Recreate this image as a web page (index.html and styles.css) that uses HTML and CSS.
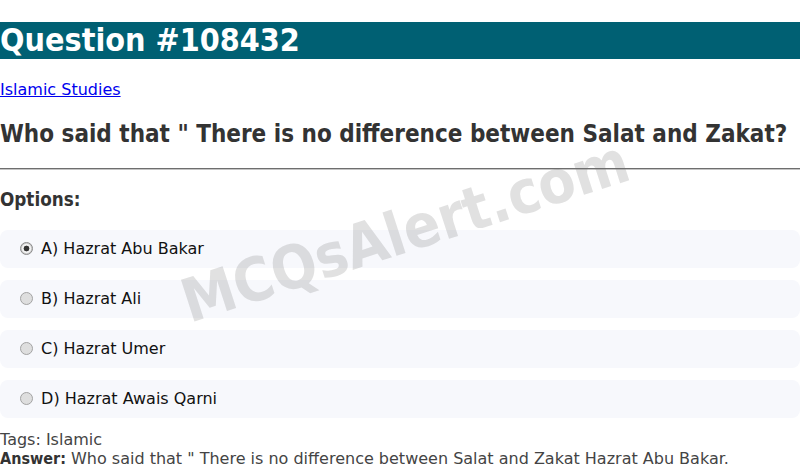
FILE: index.html
```html
<!DOCTYPE html>
<html>
<head>
<meta charset="utf-8">
<link rel="stylesheet" href="styles.css">
</head>
<body>
<div class="page">
  <h1 class="title">Question #108432</h1>
  <p class="cat"><a href="#">Islamic Studies</a></p>
  <h2 class="question">Who said that " There is no difference between Salat and Zakat?</h2>
  <hr class="rule">
  <h3 class="opts-head">Options:</h3>
  <div class="options">
    <label class="option"><input class="radio" type="radio" name="q" checked> A) Hazrat Abu Bakar</label>
    <label class="option"><input class="radio" type="radio" name="q"> B) Hazrat Ali</label>
    <label class="option"><input class="radio" type="radio" name="q"> C) Hazrat Umer</label>
    <label class="option"><input class="radio" type="radio" name="q"> D) Hazrat Awais Qarni</label>
  </div>
  <div class="meta">
    <div class="tags">Tags: Islamic</div>
    <div class="answer"><b>Answer:</b> Who said that " There is no difference between Salat and Zakat Hazrat Abu Bakar.</div>
  </div>
  <div class="watermark">MCQsAlert.com</div>
</div>
</body>
</html>
```

FILE: styles.css
```css
html, body {
  margin: 0;
  padding: 0;
  background: #fff;
}
body {
  font-family: "DejaVu Sans", sans-serif;
  font-size: 16px;
  color: #333;
  overflow: hidden;
}
.page {
  position: relative;
  padding-top: 22px;
}
.title {
  margin: 0 0 21px;
  background: #006073;
  color: #fff;
  font-family: "DejaVu Sans Condensed", "DejaVu Sans", sans-serif;
  font-size: 32px;
  font-weight: bold;
  line-height: 37px;
}
.cat {
  margin: 0;
  line-height: 19px;
}
.cat a {
  color: #0000ee;
}
.question {
  margin: 21px 0 0;
  font-family: "DejaVu Sans Condensed", "DejaVu Sans", sans-serif;
  font-size: 24px;
  font-weight: bold;
  line-height: 28px;
  color: #333;
}
.rule {
  margin: 20px 0 0;
  border: 0;
  border-top: 1px solid #6e6e6e;
  border-bottom: 1px solid #c4c4c4;
  height: 0;
}
.opts-head {
  margin: 19px 0 0;
  font-family: "DejaVu Sans Condensed", "DejaVu Sans", sans-serif;
  font-size: 18.72px;
  font-weight: bold;
  line-height: 22px;
}
.options {
  margin-top: 19px;
  display: flex;
  flex-direction: column;
  gap: 12px;
}
.option {
  display: block;
  background: #f7f8fc;
  border-radius: 8px;
  padding: 10px 15px;
  line-height: 18px;
  color: #111;
}
.radio {
  appearance: none;
  -webkit-appearance: none;
  box-sizing: border-box;
  margin: 0 3px 0 5px;
  width: 13px;
  height: 13px;
  border-radius: 50%;
  border: 1px solid #a3a3a3;
  background: #dedede;
  vertical-align: -1px;
}
.radio:checked {
  border-color: #8a8a8a;
  background: radial-gradient(circle, #333 0, #333 2.6px, #f2f2f2 3.2px, #f2f2f2 4.2px, #cfcfcf 5px);
}
.meta {
  margin-top: 12px;
  line-height: 19px;
  color: #444;
}
.answer b {
  font-family: "DejaVu Sans Condensed", "DejaVu Sans", sans-serif;
  color: #333;
}
.watermark {
  position: absolute;
  left: 160px;
  top: 196px;
  width: 490px;
  text-align: center;
  font-family: "DejaVu Sans Condensed", "DejaVu Sans", sans-serif;
  font-size: 60px;
  font-weight: bold;
  color: rgba(120, 120, 120, 0.22);
  transform: rotate(-18deg);
  pointer-events: none;
  white-space: nowrap;
}
```
